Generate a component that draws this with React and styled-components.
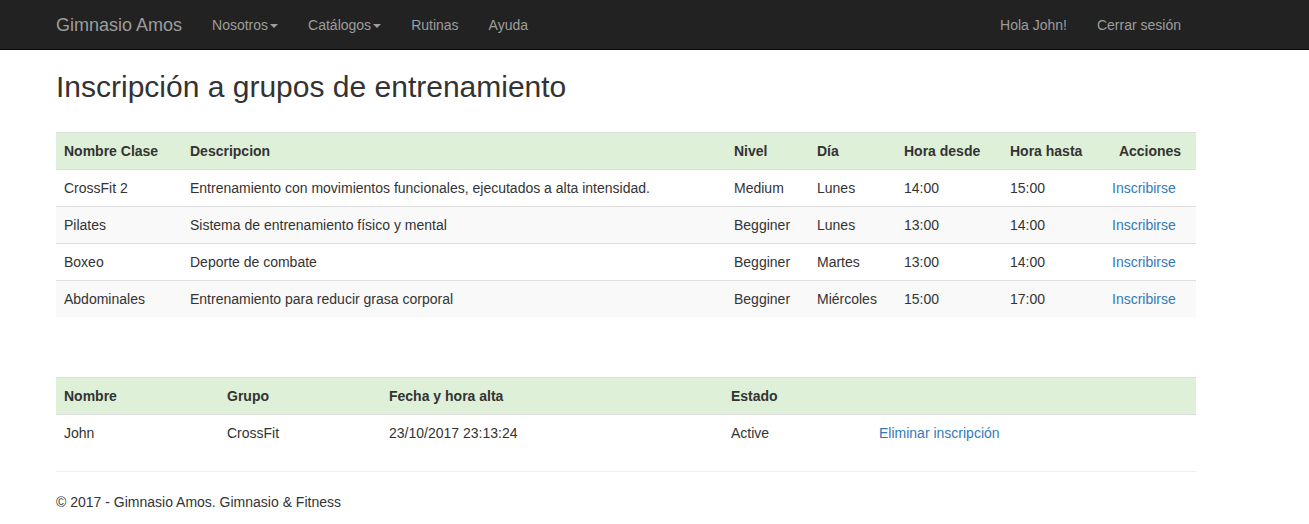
import React from "react";
import styled, { createGlobalStyle } from "styled-components";

const GlobalStyle = createGlobalStyle`
  * { box-sizing: border-box; }
  html, body { margin: 0; padding: 0; background: #fff; }
  body {
    font-family: "Liberation Sans", Arial, Helvetica, sans-serif;
    font-size: 14px;
    line-height: 1.42857143;
    color: #333;
  }
`;

const Navbar = styled.nav`
  height: 50px;
  background: #222;
  border-bottom: 1px solid #080808;
`;

const NavContainer = styled.div`
  width: 1170px;
  margin-left: 41px;
  display: flex;
  align-items: flex-start;
`;

const Brand = styled.a`
  display: block;
  padding: 15px;
  height: 50px;
  font-size: 18px;
  line-height: 20px;
  color: #9d9d9d;
  text-decoration: none;
`;

const NavList = styled.ul`
  list-style: none;
  margin: 0;
  padding: 0;
  display: flex;
  margin-left: ${(p) => (p.$right ? "auto" : "0")};
  margin-right: ${(p) => (p.$right ? "15px" : "0")};
`;

const NavLink = styled.a`
  display: block;
  padding: 15px;
  line-height: 20px;
  color: #9d9d9d;
  text-decoration: none;
`;

const Caret = styled.span`
  display: inline-block;
  width: 0;
  height: 0;
  margin-left: 2px;
  vertical-align: middle;
  border-top: 4px dashed;
  border-right: 4px solid transparent;
  border-left: 4px solid transparent;
`;

const Container = styled.div`
  width: 1170px;
  margin-left: 41px;
  padding: 0 15px;
`;

const Title = styled.h2`
  font-size: 30px;
  font-weight: 500;
  line-height: 1.1;
  margin: 20px 0 29px;
`;

const Table = styled.table`
  width: 100%;
  border-collapse: collapse;
  border-spacing: 0;
  table-layout: fixed;
  margin-bottom: ${(p) => p.$mb || "20px"};
`;

const Row = styled.tr`
  background: ${(p) => (p.$head ? "#dff0d8" : p.$striped ? "#f9f9f9" : "#fff")};
`;

const Th = styled.th`
  padding: 8px;
  line-height: 20px;
  text-align: ${(p) => (p.$center ? "center" : "left")};
  font-weight: bold;
  border-top: 1px solid #ddd;
  vertical-align: top;
`;

const Td = styled.td`
  padding: 8px;
  line-height: 20px;
  border-top: 1px solid #ddd;
  vertical-align: top;
`;

const Link = styled.a`
  color: #337ab7;
  text-decoration: none;
`;

const Hr = styled.hr`
  margin: 20px 0;
  border: 0;
  border-top: 1px solid #eee;
`;

const Footer = styled.footer`
  p { margin: 0 0 10px; }
`;

const classes = [
  ["CrossFit 2", "Entrenamiento con movimientos funcionales, ejecutados a alta intensidad.", "Medium", "Lunes", "14:00", "15:00"],
  ["Pilates", "Sistema de entrenamiento físico y mental", "Begginer", "Lunes", "13:00", "14:00"],
  ["Boxeo", "Deporte de combate", "Begginer", "Martes", "13:00", "14:00"],
  ["Abdominales", "Entrenamiento para reducir grasa corporal", "Begginer", "Miércoles", "15:00", "17:00"],
];

const widths1 = [126, 544, 83, 87, 106, 102, 92];
const widths2 = [163, 162, 342, 148, 325];

export default function App() {
  return (
    <>
      <GlobalStyle />
      <Navbar>
        <NavContainer>
          <Brand href="#">Gimnasio Amos</Brand>
          <NavList>
            <li><NavLink href="#">Nosotros<Caret /></NavLink></li>
            <li><NavLink href="#">Catálogos<Caret /></NavLink></li>
            <li><NavLink href="#">Rutinas</NavLink></li>
            <li><NavLink href="#">Ayuda</NavLink></li>
          </NavList>
          <NavList $right>
            <li><NavLink href="#">Hola John!</NavLink></li>
            <li><NavLink href="#">Cerrar sesión</NavLink></li>
          </NavList>
        </NavContainer>
      </Navbar>
      <Container>
        <Title>Inscripción a grupos de entrenamiento</Title>
        <Table $mb="60px">
          <colgroup>
            {widths1.map((w, i) => <col key={i} style={{ width: w }} />)}
          </colgroup>
          <tbody>
            <Row $head>
              <Th>Nombre Clase</Th>
              <Th>Descripcion</Th>
              <Th>Nivel</Th>
              <Th>Día</Th>
              <Th>Hora desde</Th>
              <Th>Hora hasta</Th>
              <Th $center>Acciones</Th>
            </Row>
            {classes.map((c, i) => (
              <Row key={i} $striped={i % 2 === 1}>
                {c.map((v, j) => <Td key={j}>{v}</Td>)}
                <Td><Link href="#">Inscribirse</Link></Td>
              </Row>
            ))}
          </tbody>
        </Table>
        <Table>
          <colgroup>
            {widths2.map((w, i) => <col key={i} style={{ width: w }} />)}
          </colgroup>
          <tbody>
            <Row $head>
              <Th>Nombre</Th>
              <Th>Grupo</Th>
              <Th>Fecha y hora alta</Th>
              <Th>Estado</Th>
              <Th></Th>
            </Row>
            <Row>
              <Td>John</Td>
              <Td>CrossFit</Td>
              <Td>23/10/2017 23:13:24</Td>
              <Td>Active</Td>
              <Td><Link href="#">Eliminar inscripción</Link></Td>
            </Row>
          </tbody>
        </Table>
        <Hr />
        <Footer>
          <p>© 2017 - Gimnasio Amos. Gimnasio &amp; Fitness</p>
        </Footer>
      </Container>
    </>
  );
}
